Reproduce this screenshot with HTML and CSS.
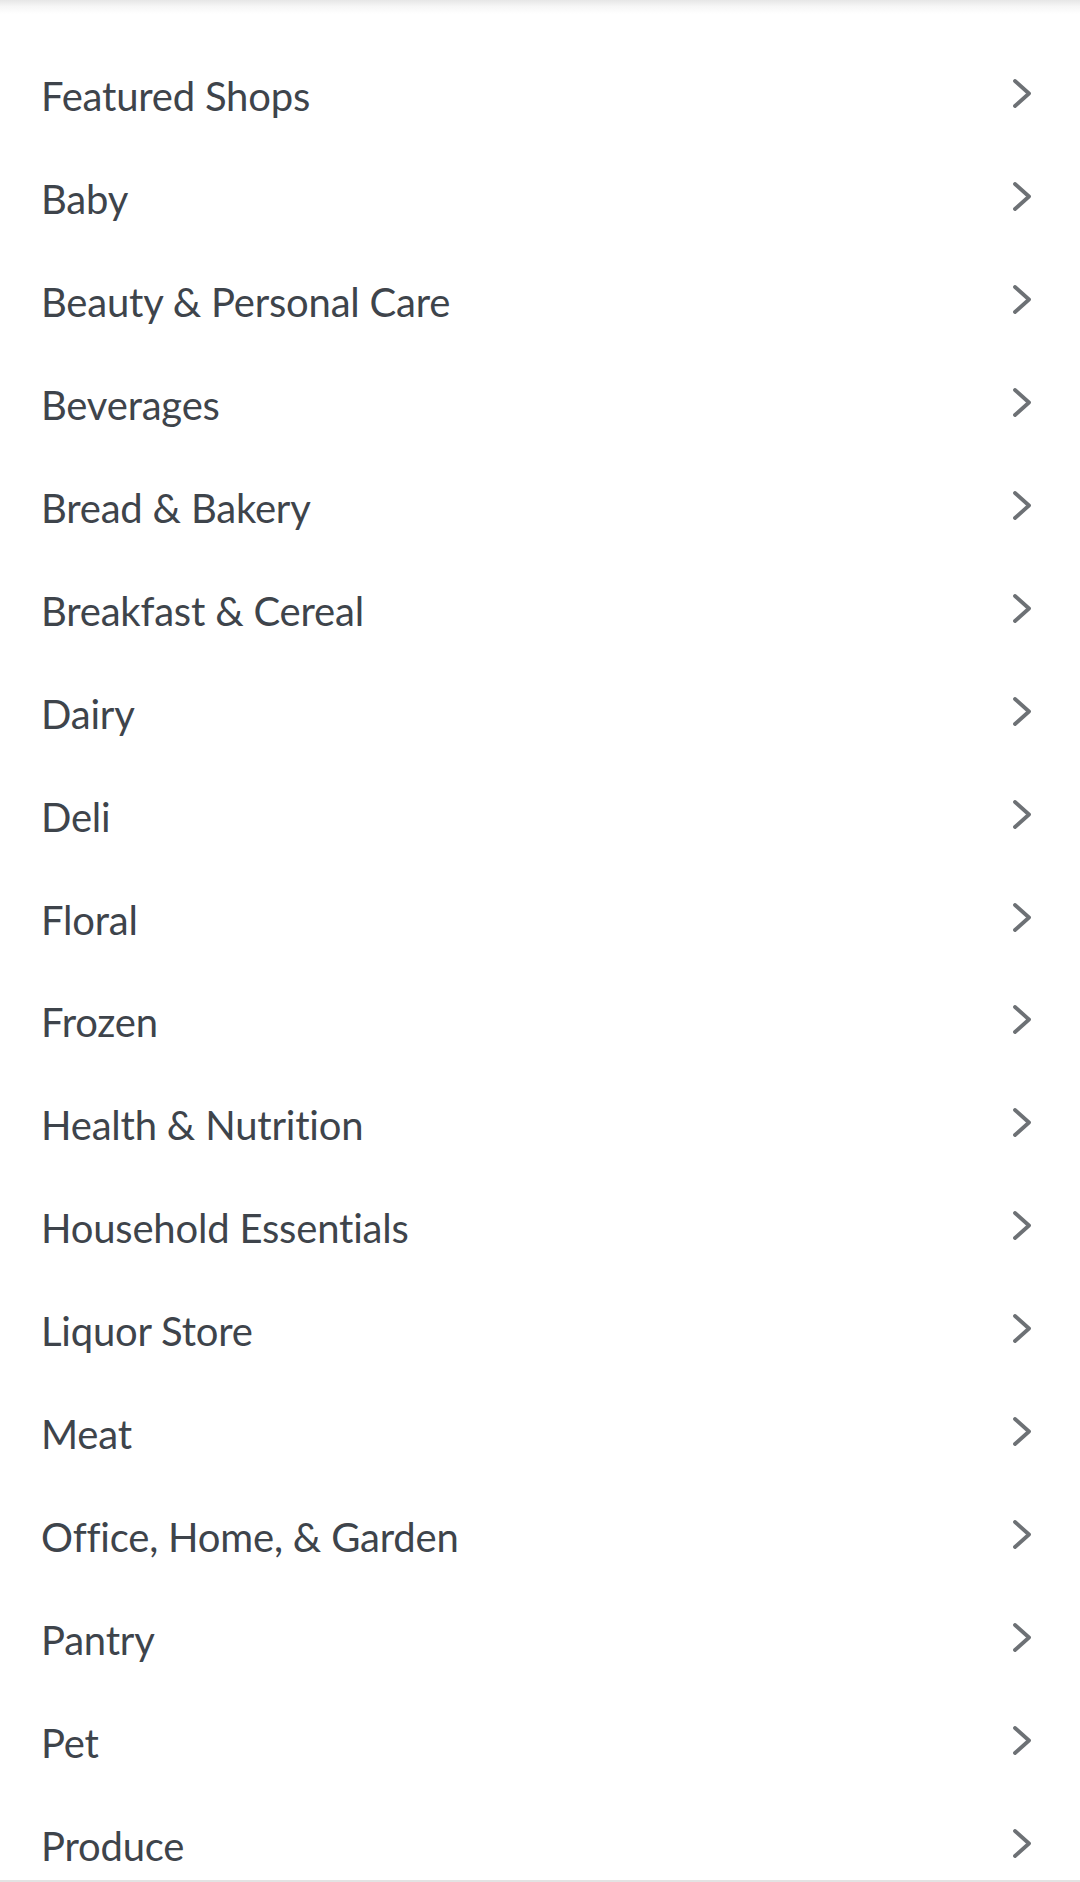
FILE: index.html
```html
<!DOCTYPE html>
<html lang="en">
<head>
<meta charset="utf-8">
<link rel="stylesheet" href="styles.css">
<title>Categories</title>
</head>
<body>
<div class="topshade"></div>
<ul class="cats">
  <li class="row"><span class="label">Featured Shops</span><svg class="chev" viewBox="0 0 18 29"><path d="M2 2 L16 14.5 L2 27"/></svg></li>
  <li class="row"><span class="label">Baby</span><svg class="chev" viewBox="0 0 18 29"><path d="M2 2 L16 14.5 L2 27"/></svg></li>
  <li class="row"><span class="label">Beauty &amp; Personal Care</span><svg class="chev" viewBox="0 0 18 29"><path d="M2 2 L16 14.5 L2 27"/></svg></li>
  <li class="row"><span class="label">Beverages</span><svg class="chev" viewBox="0 0 18 29"><path d="M2 2 L16 14.5 L2 27"/></svg></li>
  <li class="row"><span class="label">Bread &amp; Bakery</span><svg class="chev" viewBox="0 0 18 29"><path d="M2 2 L16 14.5 L2 27"/></svg></li>
  <li class="row"><span class="label">Breakfast &amp; Cereal</span><svg class="chev" viewBox="0 0 18 29"><path d="M2 2 L16 14.5 L2 27"/></svg></li>
  <li class="row"><span class="label">Dairy</span><svg class="chev" viewBox="0 0 18 29"><path d="M2 2 L16 14.5 L2 27"/></svg></li>
  <li class="row"><span class="label">Deli</span><svg class="chev" viewBox="0 0 18 29"><path d="M2 2 L16 14.5 L2 27"/></svg></li>
  <li class="row"><span class="label">Floral</span><svg class="chev" viewBox="0 0 18 29"><path d="M2 2 L16 14.5 L2 27"/></svg></li>
  <li class="row"><span class="label">Frozen</span><svg class="chev" viewBox="0 0 18 29"><path d="M2 2 L16 14.5 L2 27"/></svg></li>
  <li class="row"><span class="label">Health &amp; Nutrition</span><svg class="chev" viewBox="0 0 18 29"><path d="M2 2 L16 14.5 L2 27"/></svg></li>
  <li class="row"><span class="label">Household Essentials</span><svg class="chev" viewBox="0 0 18 29"><path d="M2 2 L16 14.5 L2 27"/></svg></li>
  <li class="row"><span class="label">Liquor Store</span><svg class="chev" viewBox="0 0 18 29"><path d="M2 2 L16 14.5 L2 27"/></svg></li>
  <li class="row"><span class="label">Meat</span><svg class="chev" viewBox="0 0 18 29"><path d="M2 2 L16 14.5 L2 27"/></svg></li>
  <li class="row"><span class="label">Office, Home, &amp; Garden</span><svg class="chev" viewBox="0 0 18 29"><path d="M2 2 L16 14.5 L2 27"/></svg></li>
  <li class="row"><span class="label">Pantry</span><svg class="chev" viewBox="0 0 18 29"><path d="M2 2 L16 14.5 L2 27"/></svg></li>
  <li class="row"><span class="label">Pet</span><svg class="chev" viewBox="0 0 18 29"><path d="M2 2 L16 14.5 L2 27"/></svg></li>
  <li class="row"><span class="label">Produce</span><svg class="chev" viewBox="0 0 18 29"><path d="M2 2 L16 14.5 L2 27"/></svg></li>
</ul>
<div class="bottombar"></div>
</body>
</html>
```
FILE: styles.css
```css
html, body {
  margin: 0;
  padding: 0;
  background: #ffffff;
}
body {
  width: 1080px;
  height: 1882px;
  overflow: hidden;
  position: relative;
  font-family: Lato, "Open Sans", sans-serif;
  color: #3e444b;
}
.topshade {
  height: 14px;
  background: linear-gradient(to bottom, #e6e6e6 0%, #f6f6f6 45%, #ffffff 100%);
}
.cats {
  list-style: none;
  margin: 0;
  padding: 30px 0 0 0;
}
.row {
  height: 102.9px;
  display: flex;
  align-items: center;
  justify-content: space-between;
  padding: 0 49px 0 41px;
}
.label {
  font-size: 40px;
  line-height: 1;
  letter-spacing: -0.2px;
  font-variant-ligatures: none;
  margin-top: 2px;
}
.chev {
  width: 18px;
  height: 29px;
  fill: none;
  stroke: #6d7175;
  stroke-width: 3.8;
  stroke-linecap: round;
  stroke-linejoin: round;
  margin-top: -3px;
}
.bottombar {
  position: absolute;
  left: 0;
  right: 0;
  bottom: 0;
  height: 2px;
  background: #e3e3e3;
}
```
